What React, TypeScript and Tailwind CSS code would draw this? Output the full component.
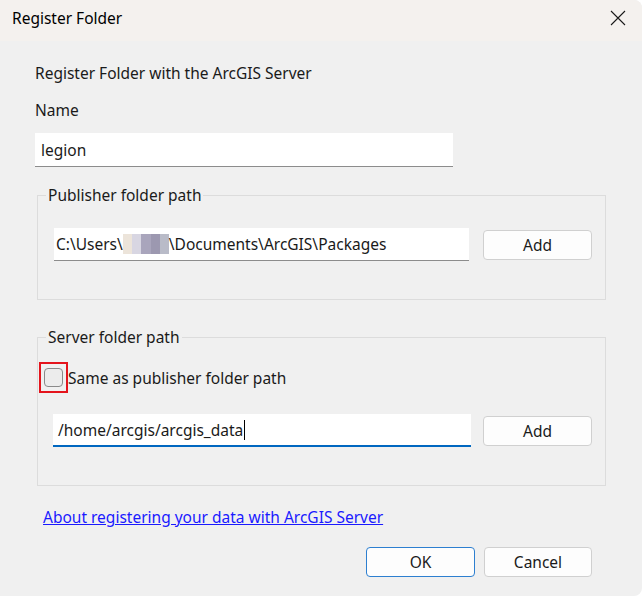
import React from "react";

const font = "font-['Segoe_UI','Noto_Sans',sans-serif]";

const AddButton = () => (
  <button className="w-[109px] h-[30px] shrink-0 rounded-[4px] border border-[#d0d0d0] bg-[#fdfdfd] text-[15.5px] text-[#1a1a1a]">
    Add
  </button>
);

const App = () => {
  return (
    <div
      className={`${font} w-[642px] h-[596px] bg-[#f0f0f0] rounded-br-[8px] rounded-tr-[8px] overflow-hidden text-[15.5px] leading-[20px] text-[#1a1a1a]`}
    >
      {/* Title bar */}
      <div className="h-[41px] bg-[#f4f1ee] flex items-center justify-between pl-[12px] pr-[16px]">
        <span className="text-[15.5px] text-black -mt-[5px]">Register Folder</span>
        <svg width="16" height="16" viewBox="0 0 16 16" className="-mt-[6px]">
          <path d="M1 1L15 15M15 1L1 15" stroke="#1a1a1a" strokeWidth="1.1" />
        </svg>
      </div>

      <div className="pl-[35px]">
        <div className="mt-[22px]">Register Folder with the ArcGIS Server</div>
        <div className="mt-[17px]">Name</div>
        <div className="mt-[13px] w-[418px] h-[34px] bg-white border-b border-[#8c8c8c] flex items-center px-[6px]">
          legion
        </div>

        {/* Publisher folder path */}
        <fieldset className="mt-[18px] ml-[2px] w-[569px] border border-[#dcdcdc] pb-[38px]">
          <legend className="ml-[8px] px-[2px] leading-[20px]">Publisher folder path</legend>
          <div className="mt-[23px] pl-[16px] flex items-center gap-[14px]">
            <div className="w-[415px] h-[33px] bg-white border-b border-[#8c8c8c] flex items-center px-[2px] whitespace-nowrap">
              C:\Users\
              <span className="inline-flex h-[20px] w-[46px]">
                <span className="w-[9px] bg-[#ece4da]" />
                <span className="w-[9px] bg-[#d8d6e2]" />
                <span className="w-[10px] bg-[#a9a5bc]" />
                <span className="w-[9px] bg-[#9c98b0]" />
                <span className="w-[9px] bg-[#b9bbc8]" />
              </span>
              \Documents\ArcGIS\Packages
            </div>
            <AddButton />
          </div>
        </fieldset>

        {/* Server folder path */}
        <fieldset className="mt-[27px] ml-[2px] w-[569px] border border-[#dcdcdc] pb-[38px]">
          <legend className="ml-[8px] px-[2px] leading-[20px]">Server folder path</legend>
          <div className="mt-[15px] pl-[1px] flex items-center">
            <div className="w-[29px] h-[31px] border-2 border-[#e4141c] flex items-center justify-center">
              <div className="w-[19px] h-[19px] rounded-[4px] border border-[#8a8a8a] bg-[#ececec]" />
            </div>
            <span>Same as publisher folder path</span>
          </div>
          <div className="mt-[21px] pl-[15px] flex items-center gap-[12px]">
            <div className="w-[418px] h-[33px] bg-white border-b-2 border-[#0067c0] flex items-center px-[5px]">
              /home/arcgis/arcgis_data
              <span className="w-[1px] h-[20px] bg-black ml-[1px]" />
            </div>
            <AddButton />
          </div>
        </fieldset>

        <div className="mt-[21px] ml-[8px]">
          <a href="#" className="text-[#1a1aff] underline">
            About registering your data with ArcGIS Server
          </a>
        </div>

        <div className="mt-[20px] flex justify-end gap-[9px] pr-[50px]">
          <button className="w-[109px] h-[30px] rounded-[4px] border-[1.5px] border-[#2d7fd0] bg-[#fdfdfd] text-[15.5px]">
            OK
          </button>
          <button className="w-[108px] h-[30px] rounded-[4px] border border-[#d0d0d0] bg-[#fdfdfd] text-[15.5px]">
            Cancel
          </button>
        </div>
      </div>
    </div>
  );
};

export default App;
